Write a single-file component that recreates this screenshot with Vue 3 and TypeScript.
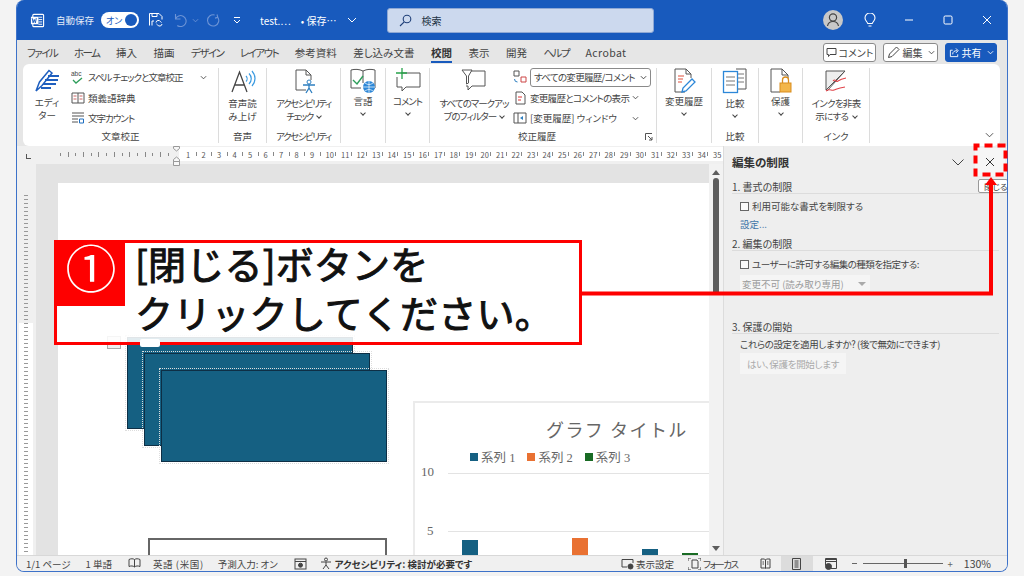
<script setup lang="ts">
const tabs = [
  { label: 'ファイル', kana: true },
  { label: 'ホーム', kana: true },
  { label: '挿入', kana: false },
  { label: '描画', kana: false },
  { label: 'デザイン', kana: true },
  { label: 'レイアウト', kana: true },
  { label: '参考資料', kana: false },
  { label: '差し込み文書', kana: false },
  { label: '校閲', kana: false },
  { label: '表示', kana: false },
  { label: '開発', kana: false },
  { label: 'ヘルプ', kana: true },
  { label: 'Acrobat', kana: false }
]
const rulerLeft = Array.from({ length: 15 }, (_, i) => i)
const rulerNums = Array.from({ length: 35 }, (_, i) => i + 1)
const legend = [
  { name: '系列 1', cls: 'c-blue' },
  { name: '系列 2', cls: 'c-orange' },
  { name: '系列 3', cls: 'c-green' }
]
const bars = [
  { cls: 'c-blue', x: 47, h: 17 },
  { cls: 'c-orange', x: 157, h: 19 },
  { cls: 'c-blue', x: 227, h: 8 },
  { cls: 'c-green', x: 267, h: 4 }
]
</script>

<template>
  <div class="stage">
    <div class="window">
      <!-- title bar -->
      <header class="titlebar">
        <svg class="ic-word" viewBox="0 0 16 16" width="15" height="15">
          <rect x="3" y="1.5" width="11.5" height="13" rx="1" fill="none" stroke="#fff" stroke-width="1.2" />
          <path d="M9 4.5h4M9 7h4M9 9.5h4M9 12h4" stroke="#fff" />
          <rect x="1" y="4" width="8" height="8" fill="#fff" />
          <path d="M2.3 5.5l1 5 1.2-3.6 1.2 3.6 1-5" fill="none" stroke="#185abd" />
        </svg>
        <span class="autosave">自動保存</span>
        <span class="toggle"><span class="toggle-text">オン</span><span class="knob"></span></span>
        <svg class="ic-save" viewBox="0 0 14 14" width="14" height="14" fill="none" stroke="#fff">
          <path d="M.5 12.5v-12h9.5l3 3v3" />
          <path d="M3 .5v3h5v-3M3 12.5V8h2" />
          <path d="M7 9.5a2.4 2.4 0 0 1 4.5-.8l1 .8M13 11a2.4 2.4 0 0 1-4.5.8l-1-.8" />
        </svg>
        <svg class="ic-undo" viewBox="0 0 14 14" width="14" height="14" fill="none" stroke="#6d94d6" stroke-width="1.1">
          <path d="M1.5 1v5h5M1.5 6a5.5 5.5 0 1 1 1.8 6.5" />
        </svg>
        <svg class="ic-mini-chev" viewBox="0 0 8 5" width="7" height="5" fill="none" stroke="#6d94d6"><path d="M1 1l3 3 3-3" /></svg>
        <svg class="ic-redo" viewBox="0 0 14 14" width="14" height="14" fill="none" stroke="#6d94d6" stroke-width="1.1">
          <path d="M11 1.5l.8 2.8-2.8.8M11.6 4a5.6 5.6 0 1 1-3-2" />
        </svg>
        <svg class="ic-qat" viewBox="0 0 8 7" width="8" height="7" fill="none" stroke="#fff"><path d="M1 .5h6M1 3l3 3 3-3" /></svg>
        <span class="docname">test.…</span>
        <span class="docstate">• 保存…</span>
        <svg class="ic-doc-chev" viewBox="0 0 10 6" width="10" height="6" fill="none" stroke="#fff"><path d="M1 1l4 4 4-4" /></svg>
        <div class="search">
          <svg viewBox="0 0 13 13" width="13" height="13" fill="none" stroke="#1f3f78" stroke-width="1.1">
            <circle cx="8" cy="5" r="3.8" /><path d="M5.2 7.8L1 12" />
          </svg>
          <span>検索</span>
        </div>
        <div class="title-right">
          <span class="avatar">
            <svg viewBox="0 0 20 20" width="20" height="20" fill="none" stroke="#444" stroke-width="1.2">
              <circle cx="10" cy="7.5" r="3.6" /><path d="M4.5 16c.6-3 3-4.5 5.5-4.5s4.900 1.500 5.500 4.500" />
            </svg>
          </span>
          <svg class="ic-bulb" viewBox="0 0 12 15" width="12" height="15" fill="none" stroke="#fff" stroke-width="1.1">
            <path d="M3.800 10.500C3 8.500 1 7.500 1 5a5 5 0 0 1 10 0c0 2.500-2 3.500-2.800 5.500zM4.500 13h3" />
          </svg>
          <svg class="ic-win" viewBox="0 0 10 10" width="10" height="10" stroke="#fff" fill="none"><path d="M1 5h8" /></svg>
          <svg class="ic-win" viewBox="0 0 10 10" width="10" height="10" stroke="#fff" fill="none"><rect x="1" y="1" width="8" height="8" rx="1.200" /></svg>
          <svg class="ic-win" viewBox="0 0 10 10" width="10" height="10" stroke="#fff" fill="none"><path d="M1 1l8 8M9 1l-8 8" /></svg>
        </div>
      </header>

      <!-- tabs -->
      <nav class="tabs">
        <span
          v-for="t in tabs"
          :key="t.label"
          class="tab"
          :class="{ active: t.label === '校閲', 'tab-kana': t.kana, 'tab-latin': t.label === 'Acrobat' }"
        >{{ t.label }}</span>
        <div class="tab-actions">
          <button class="pill pill-comment">
            <svg viewBox="0 0 11 11" width="11" height="11" fill="none" stroke="#444"><path d="M1 1.500h9v6H4L2.500 9.500v-2H1z" /></svg>
            コメント
          </button>
          <button class="pill pill-edit">
            <svg viewBox="0 0 14 14" width="14" height="14" fill="none" stroke="#444"><path d="M1.500 12.500l1-3.500 7-7 2.500 2.500-7 7z" /></svg>
            編集
            <svg class="chev" viewBox="0 0 8 5" width="7" height="5" fill="none" stroke="#444"><path d="M1 1l3 3 3-3" /></svg>
          </button>
          <button class="pill pill-share">
            <svg viewBox="0 0 12 12" width="11" height="11" fill="none" stroke="#fff"><path d="M4 3.500H1.500v7h8V8M4 8c0-3 2-4 5-4M7.500 1.500L10 4 7.500 6.500" /></svg>
            共有
            <svg class="chev" viewBox="0 0 8 5" width="7" height="5" fill="none" stroke="#fff"><path d="M1 1l3 3 3-3" /></svg>
          </button>
        </div>
      </nav>

      <!-- ribbon -->
      <section class="ribbon">
        <div class="group g-spell">
          <div class="group-body">
            <div class="big editor-btn">
              <svg viewBox="0 0 26 26" width="26" height="26">
                <path d="M2 23l3.500-9L15 2.500l3 2.500-10 12.500z" fill="none" stroke="#1f5fbf" stroke-width="1.500" />
                <path d="M14 8h11M11 12h13M9 16h13M7 20h10" stroke="#1f5fbf" stroke-width="2" />
              </svg>
              <span>エディ<br />ター</span>
            </div>
            <div class="rows spell-rows">
              <div class="row">
                <svg viewBox="0 0 14 14" width="14" height="14" fill="none"><text x="0" y="6" font-size="6.500" fill="#444" font-family="Liberation Sans">abc</text><path d="M2 10l3 3 6-5" stroke="#2e9e5b" stroke-width="1.300" /></svg>
                <span class="kana">スペル チェックと文章校正</span>
                <svg class="row-chev" viewBox="0 0 8 5" width="7" height="5" fill="none" stroke="#444"><path d="M1 1l3 3 3-3" /></svg>
              </div>
              <div class="row">
                <svg viewBox="0 0 14 14" width="14" height="14" fill="none" stroke="#555"><path d="M1 2h12v10H1zM7 2v10" /><path d="M2.500 5h3M8.500 5h3M2.500 8h3M8.500 8h3" stroke="#c66" /></svg>
                <span>類義語辞典</span>
              </div>
              <div class="row">
                <svg viewBox="0 0 14 14" width="14" height="14" fill="none" stroke="#555"><path d="M1 2h12M1 5h12M1 8h6M1 11h6" /><path d="M8.500 8h4v4h-4z" stroke="#1f6fc0" /></svg>
                <span class="kana">文字カウント</span>
              </div>
            </div>
          </div>
          <div class="group-label">文章校正</div>
        </div>

        <div class="group g-voice">
          <div class="group-body">
            <div class="big">
              <svg viewBox="0 0 26 26" width="26" height="26" fill="none">
                <path d="M2 24L9.500 4 17 24M5 17h9" stroke="#444" stroke-width="1.300" />
                <path d="M16 8c1.500 1.500 1.500 4 0 5.500M19 5.500c3 3 3 7.500 0 10.500M22 3c4 4.500 4 10.500 0 15" stroke="#3a9ae0" stroke-width="1.200" />
              </svg>
              <span>音声読<br />み上げ</span>
            </div>
          </div>
          <div class="group-label">音声</div>
        </div>

        <div class="group g-access">
          <div class="group-body">
            <div class="big">
              <svg viewBox="0 0 26 26" width="26" height="26" fill="none">
                <path d="M15 22H5V2h10l5 5v5M15 2v5h5" stroke="#555" />
                <circle cx="18" cy="14" r="2" stroke="#2e7fc0" />
                <path d="M12 17h12M18 16v4l-3 5M18 20l3 5" stroke="#2e7fc0" stroke-width="1.300" />
              </svg>
              <span class="kana-tight">アクセシビリティ<br />チェック <i class="inline-chev"></i></span>
            </div>
          </div>
          <div class="group-label kana-tight">アクセシビリティ</div>
        </div>

        <div class="group g-lang">
          <div class="group-body">
            <div class="big tight">
              <svg viewBox="0 0 26 26" width="26" height="26" fill="none">
                <path d="M1 2c4-1 8-1 12 1 4-2 8-2 12-1v18h-10M13 3v12M1 2v18h10" stroke="#555" />
                <path d="M3 12l4 4 6-8" stroke="#2e9e5b" stroke-width="1.400" />
                <circle cx="19" cy="19" r="6" fill="#2c87d8" />
                <path d="M13 19h12M19 13v12M15 15c3 2 5 2 8 0M15 23c3-2 5-2 8 0" stroke="#fff" stroke-width=".7" />
              </svg>
              <span>言語</span>
              <i class="block-chev"></i>
            </div>
          </div>
        </div>

        <div class="group g-comment">
          <div class="group-body">
            <div class="big tight">
              <svg viewBox="0 0 26 26" width="26" height="26" fill="none">
                <path d="M6 5h19v14H11l-4 4v-4H2V9" stroke="#555" />
                <path d="M7 0v11M1 5h11" stroke="#27a34a" stroke-width="1.300" />
              </svg>
              <span class="kana">コメント</span>
              <i class="block-chev"></i>
            </div>
          </div>
        </div>

        <div class="group g-track">
          <div class="group-body">
            <div class="big markup">
              <svg viewBox="0 0 26 26" width="26" height="26" fill="none">
                <path d="M2 3h22v15H11l-4 4v-4H5" stroke="#555" />
                <path d="M1 2h10L7.500 8v7l-2 1V8z" stroke="#555" fill="#fff" />
              </svg>
              <span class="kana">すべてのマークアッ<br />プのフィルター <i class="inline-chev"></i></span>
            </div>
            <div class="rows track-rows">
              <div class="row">
                <svg viewBox="0 0 14 14" width="14" height="14" fill="none"><path d="M1 1h5v5H1z" stroke="#555" /><path d="M1.500 9a3 3 0 0 0 3 3" stroke="#2e7fc0" /><path d="M8 7h5v5H8z" stroke="#c44" /></svg>
                <div class="combo"><span class="kana-soft">すべての変更履歴/コメント</span><svg viewBox="0 0 8 5" width="7" height="5" fill="none" stroke="#333"><path d="M1 1l3 3 3-3" /></svg></div>
              </div>
              <div class="row">
                <svg viewBox="0 0 14 14" width="14" height="14" fill="none" stroke="#555"><path d="M3 1h6l3 3v9H3z" /><path d="M5 6h4M5 9h3" stroke="#d33" /></svg>
                <span class="kana-soft">変更履歴とコメントの表示</span>
                <svg class="row-chev" viewBox="0 0 8 5" width="7" height="5" fill="none" stroke="#444"><path d="M1 1l3 3 3-3" /></svg>
              </div>
              <div class="row">
                <svg viewBox="0 0 14 14" width="14" height="14" fill="none" stroke="#555"><path d="M1 2h12v10H1zM5 2v10" /><path d="M7 7l3-2v4z" fill="#2e7fc0" stroke="none" /></svg>
                <span>[変更履歴] ウィンドウ</span>
                <svg class="row-chev" viewBox="0 0 8 5" width="7" height="5" fill="none" stroke="#444"><path d="M1 1l3 3 3-3" /></svg>
              </div>
            </div>
          </div>
          <div class="group-label track-label">校正履歴
            <svg class="launcher" viewBox="0 0 8 8" width="8" height="8" fill="none" stroke="#555"><path d="M.5 7V.5H7M3 3l4 4M4 7h3V4" /></svg>
          </div>
        </div>

        <div class="group g-changes">
          <div class="group-body">
            <div class="big tight">
              <svg viewBox="0 0 26 26" width="26" height="26" fill="none">
                <path d="M14 24H4V1h11l5 5v4M15 1v5h5" stroke="#555" />
                <path d="M7 8h6M7 11h5M7 14h4" stroke="#e0503c" />
                <path d="M11 24l1-4 9-9 3 3-9 9z" stroke="#2c87d8" stroke-width="1.300" />
              </svg>
              <span>変更履歴</span>
              <i class="block-chev"></i>
            </div>
          </div>
        </div>

        <div class="group g-compare">
          <div class="group-body">
            <div class="big">
              <svg viewBox="0 0 26 26" width="26" height="26" fill="none">
                <path d="M14 1h10v20H14" stroke="#555" />
                <path d="M16 6h6M16 10h6M16 14h6" stroke="#777" />
                <rect x="1.500" y="3.500" width="14" height="21" fill="#fff" stroke="#2c87d8" stroke-width="1.300" />
                <path d="M4 9h9M4 13h9M4 17h9" stroke="#777" />
              </svg>
              <span>比較</span>
              <i class="block-chev"></i>
            </div>
          </div>
          <div class="group-label">比較</div>
        </div>

        <div class="group g-protect">
          <div class="group-body">
            <div class="big tight">
              <svg viewBox="0 0 26 26" width="26" height="26" fill="none">
                <path d="M12 24H3V1h11l6 6v3M14 1v6h6" stroke="#555" />
                <rect x="12" y="15" width="11" height="9" fill="#f3b64a" stroke="#d98d1e" />
                <path d="M14.500 15v-3a3 3 0 0 1 6 0v3" stroke="#d98d1e" stroke-width="1.300" />
              </svg>
              <span>保護</span>
              <i class="block-chev"></i>
            </div>
          </div>
        </div>

        <div class="group g-ink">
          <div class="group-body">
            <div class="big">
              <svg viewBox="0 0 26 26" width="26" height="26" fill="none">
                <path d="M3 3h19L3 22z" fill="#eee" stroke="#555" />
                <path d="M4 23L22 3" stroke="#555" />
                <path d="M10 13c3-3 2 2 5 0s3-2 8-3M3 23c4-3 5 0 8-1s4-2 11-3" stroke="#e0444a" stroke-width="1.100" />
              </svg>
              <span class="kana-soft">インクを非表<br />示にする <i class="inline-chev"></i></span>
            </div>
          </div>
          <div class="group-label">インク</div>
        </div>

        <svg class="collapse" viewBox="0 0 10 6" width="9" height="6" fill="none" stroke="#444"><path d="M1 1l4 4 4-4" /></svg>
      </section>

      <!-- workspace -->
      <div class="workspace">
        <main class="main">
          <div class="ruler">
            <div class="ruler-corner"><span class="tab-stop"></span></div>
            <div class="ruler-gray">
              <i v-for="n in rulerLeft" :key="n" :class="{ long: n % 2 === 1 }"></i>
            </div>
            <div class="ruler-white">
              <svg class="indent-marker" viewBox="0 0 9 20" width="9" height="20" fill="#f7f7f7" stroke="#999">
                <path d="M1.500.5h6v2L4.500 5l-3-2.500z" />
                <path d="M4.500 11l3 2.500v2h-6v-2zM1.500 15.500h6v4h-6z" />
              </svg>
              <div v-for="n in rulerNums" :key="n" class="ruler-cell"><em>{{ n }}</em><i></i></div>
            </div>
          </div>

          <div class="doc">
            <div class="vruler"><div class="vr-gray"></div><div class="vr-white"></div></div>
            <div class="gutter"></div>
            <div class="page-wrap">
              <div class="page">
                <div class="layout-opt"></div>
                <div class="shape s1"></div>
                <div class="handle"></div>
                <div class="shape s2"></div>
                <div class="shape s3"></div>
                <div class="textbox"></div>
                <div class="chart">
                  <div class="chart-title">グラフ タイトル</div>
                  <div class="legend">
                    <span v-for="l in legend" :key="l.name"><i :class="l.cls"></i>{{ l.name }}</span>
                  </div>
                  <span class="axis a10">10</span>
                  <span class="axis a5">5</span>
                  <div class="grid g10"></div>
                  <div class="grid g5"></div>
                  <div
                    v-for="b in bars"
                    :key="b.x"
                    class="bar"
                    :class="b.cls"
                    :style="{ left: b.x + 'px', height: b.h + 'px' }"
                  ></div>
                </div>
              </div>
            </div>
            <div class="scrollbar">
              <i class="arrow-up"></i>
              <div class="thumb"></div>
              <i class="arrow-down"></i>
            </div>
          </div>
        </main>

        <aside class="panel">
          <div class="panel-head">
            <h2>編集の制限</h2>
            <svg viewBox="0 0 12 7" width="12" height="7" fill="none" stroke="#444"><path d="M.5.500L6 6l5.500-5.500" /></svg>
            <button class="panel-close">
              <svg viewBox="0 0 10 10" width="10" height="10" fill="none" stroke="#333"><path d="M1 1l8 8M9 1l-8 8" /></svg>
            </button>
          </div>
          <div class="tooltip">閉じる</div>

          <h3>1. 書式の制限</h3>
          <label class="check"><i></i>利用可能な書式を制限する</label>
          <a class="link">設定...</a>

          <h3 class="sec2">2. 編集の制限</h3>
          <label class="check narrow"><i></i>ユーザーに許可する編集の種類を指定する:</label>
          <div class="select">変更不可 (読み取り専用)<span></span></div>

          <h3 class="sec3">3. 保護の開始</h3>
          <p class="question">これらの設定を適用しますか? (後で無効にできます)</p>
          <button class="start">はい、保護を開始します</button>
        </aside>
      </div>

      <!-- status bar -->
      <footer class="status">
        <span>1/1 ページ</span>
        <span class="st-words">1 単語</span>
        <svg class="st-book" viewBox="0 0 13 12" width="13" height="12" fill="none" stroke="#444"><path d="M1 1.500c2-1 4-1 5.500 0 1.500-1 3.500-1 5.500 0v7c-2-.8-4-.8-5.500.5C5 7.700 3 7.700 1 8.500zM6.500 1.500V9" /></svg>
        <span class="st-lang">英語 (米国)</span>
        <span class="st-pred">予測入力: オン</span>
        <svg class="st-macro" viewBox="0 0 13 12" width="13" height="12" fill="none" stroke="#444"><rect x="1" y="1" width="11" height="10" /><path d="M1 3.500h11" /><circle cx="6.500" cy="7.200" r="2" fill="#444" /></svg>
        <svg class="st-acc" viewBox="0 0 13 13" width="13" height="13" fill="none" stroke="#444"><circle cx="6" cy="2.500" r="1.500" /><path d="M1 5h10M6 5v3L3 12M6 8l3 4" /></svg>
        <strong>アクセシビリティ: 検討が必要です</strong>
        <div class="st-right">
          <svg viewBox="0 0 13 12" width="13" height="12" fill="none" stroke="#444"><path d="M6 9H1V1.500h11V5" /><circle cx="9.500" cy="8.500" r="2.500" fill="#444" /></svg>
          <span class="st-disp">表示設定</span>
          <svg class="st-focus" viewBox="0 0 13 12" width="13" height="12" fill="none" stroke="#444"><path d="M4 2h5l1 1.500V10H4zM0 3V0h3M13 3V0h-3M0 9v3h3M13 9v3h-3" /></svg>
          <span class="st-foc">フォーカス</span>
          <svg class="st-read" viewBox="0 0 11 11" width="11" height="11" fill="none" stroke="#444"><path d="M1 1h3.500l1 1 1-1H10v9H6.500l-1 .5-1-.5H1zM5.500 2v8M2.500 4h1.500M2.500 6h1.500M7 4h1.500M7 6h1.500" /></svg>
          <div class="view-active">
            <svg viewBox="0 0 9 12" width="9" height="12" fill="none" stroke="#444"><path d="M.5.500h8v11h-8zM2.500 3h4M2.500 5h4M2.500 7h4M2.500 9h4" /></svg>
          </div>
          <svg class="st-web" viewBox="0 0 12 12" width="12" height="12" fill="none" stroke="#444"><path d="M.5 1.500h11M.5 3.500h11M.5.500h11v10H6" /><path d="M.5.500v7" /><circle cx="3.500" cy="8.500" r="3" fill="#444" /></svg>
          <span class="zoom-minus"></span>
          <div class="slider"><i></i></div>
          <span class="zoom-plus">+</span>
          <span class="zoom-val">130%</span>
        </div>
      </footer>
    </div>

    <!-- annotation on top of the screenshot -->
    <svg class="connector" viewBox="0 0 1024 576" width="1024" height="576" fill="none" stroke="#fe0000">
      <path d="M581 293.500H991V184" stroke-width="4" />
      <path d="M991 177l-6 8h12z" fill="#fe0000" stroke="none" />
      <rect x="975.500" y="145.500" width="30" height="29" stroke-width="4" stroke-dasharray="8 5" stroke-dashoffset="4" />
    </svg>
    <div class="note">
      <div class="note-num">①</div>
      <div class="note-text">[閉じる]ボタンを<br />クリックしてください。</div>
    </div>
  </div>
</template>

<style>
html,
body {
  margin: 0;
  background: #f3f3f3;
}
</style>

<style scoped>
* {
  box-sizing: border-box;
}

.stage {
  position: relative;
  width: 1024px;
  height: 576px;
  padding: 0 16px 4px;
  overflow: hidden;
  background: #f3f3f3;
  font-family: "Noto Sans CJK JP", "Noto Sans", sans-serif;
  font-feature-settings: "palt";
  color: #444;
  font-size: 9.5px;
}

.kana {
  letter-spacing: -1px;
}

.kana-tight {
  letter-spacing: -1.5px;
}

.kana-soft {
  letter-spacing: -0.7px;
}

.window {
  display: flex;
  flex-direction: column;
  height: 100%;
  background: #e6e6e6;
  border: 1px solid #3d72c9;
  border-top: 0;
  border-radius: 8px;
  overflow: hidden;
}

/* title bar */
.titlebar {
  display: flex;
  align-items: center;
  flex: 0 0 40px;
  padding: 0 0 0 13px;
  background: #185abd;
  color: #fff;
}

.autosave {
  margin-left: 11px;
  font-size: 9.5px;
  color: #e4ecf8;
}

.toggle {
  display: flex;
  align-items: center;
  justify-content: space-between;
  width: 38px;
  height: 16px;
  margin-left: 7px;
  padding: 0 2px 0 5px;
  background: #fff;
  border-radius: 8px;
  color: #185abd;
  font-size: 9px;
}

.knob {
  width: 12px;
  height: 12px;
  border-radius: 50%;
  background: #185abd;
}

.ic-save {
  margin-left: 10px;
}

.ic-undo {
  margin-left: 11px;
}

.ic-mini-chev {
  margin-left: 4px;
}

.ic-redo {
  margin-left: 7px;
}

.ic-qat {
  margin-left: 13px;
}

.docname {
  margin-left: 19px;
  font-size: 10px;
}

.docstate {
  margin-left: 10px;
  font-size: 10px;
}

.ic-doc-chev {
  margin-left: 10px;
}

.search {
  display: flex;
  align-items: center;
  gap: 10px;
  width: 267px;
  height: 25px;
  margin-left: 30px;
  padding-left: 11px;
  background: #ccd9ee;
  border: 1px solid #8ea8d4;
  border-radius: 3px;
  color: #234;
  font-size: 10px;
}

.title-right {
  display: flex;
  align-items: center;
  margin-left: auto;
  padding-right: 15px;
}

.avatar {
  display: flex;
  width: 20px;
  height: 20px;
  border-radius: 50%;
  background: #c8c8c8;
}

.ic-bulb {
  margin-left: 21px;
  margin-right: 28px;
}

.ic-win {
  margin-left: 29px;
}

.ic-bulb + .ic-win {
  margin-left: 0;
}

/* tabs */
.tabs {
  display: flex;
  align-items: center;
  flex: 0 0 24px;
  gap: 16.5px;
  padding-left: 10px;
  background: #e6e6e6;
  font-size: 10.5px;
  color: #444;
}

.tab {
  position: relative;
  white-space: nowrap;
}

.tab-kana {
  letter-spacing: -1.5px;
}

.tab-latin {
  letter-spacing: 0.4px;
}

.tab.active {
  font-weight: 700;
  color: #333;
}

.tab.active::after {
  content: "";
  position: absolute;
  left: 0;
  right: 0;
  bottom: -3px;
  height: 2px;
  background: #185abd;
}

.tab-actions {
  display: flex;
  gap: 7px;
  margin-left: auto;
  padding-right: 10px;
}

.pill {
  display: flex;
  align-items: center;
  justify-content: center;
  gap: 2px;
  height: 19px;
  padding: 0;
  background: #fff;
  border: 1px solid #8a8a8a;
  border-radius: 3px;
  color: #444;
  font: inherit;
  font-size: 10px;
  white-space: nowrap;
}

.pill-comment {
  width: 53px;
}

.pill-edit {
  width: 55px;
}

.pill-share {
  width: 52px;
  background: #185abd;
  border-color: #185abd;
  color: #fff;
}

.pill .chev {
  margin-left: 3px;
}

/* ribbon */
.ribbon {
  position: relative;
  display: flex;
  flex: 0 0 82px;
  margin: 0 7px 0 6px;
  padding: 4px 0 3px;
  background: #fff;
  border-radius: 6px;
  font-size: 9.5px;
}

.group {
  display: flex;
  flex-direction: column;
  border-right: 1px solid #dcdcdc;
}

.g-spell { width: 196px; }
.g-voice { width: 48px; }
.g-access { width: 74px; }
.g-lang { width: 45px; }
.g-comment { width: 44px; }
.g-track { width: 227px; }
.g-changes { width: 55px; }
.g-compare { width: 47px; }
.g-protect { width: 44px; }
.g-ink { width: 67px; }

.group-body {
  display: flex;
  flex: 1;
  min-height: 0;
}

.group-label {
  flex: 0 0 13px;
  text-align: center;
  line-height: 13px;
  font-size: 9.5px;
  white-space: nowrap;
}

.big {
  display: flex;
  flex-direction: column;
  align-items: center;
  flex: 1;
  text-align: center;
  line-height: 13px;
  white-space: nowrap;
}

.big svg {
  margin-bottom: 3px;
}

.big.tight svg {
  margin-bottom: 1px;
}

.editor-btn {
  flex: 0 0 48px;
}

.editor-btn svg {
  margin-bottom: 2px;
}

.markup {
  flex: 0 0 88px;
}

.rows {
  display: flex;
  flex-direction: column;
  justify-content: space-between;
  flex: 1;
  min-width: 0;
  height: 58px;
  padding-top: 1px;
}

.spell-rows {
  padding-right: 11px;
}

.track-rows {
  margin-left: -5px;
  padding-right: 17px;
}

.row {
  position: relative;
  display: flex;
  align-items: center;
  gap: 3px;
  height: 16px;
  white-space: nowrap;
}

.row > svg {
  flex: none;
}

.row-chev {
  margin-left: auto;
}

.combo {
  display: flex;
  flex: 0 0 121px;
  align-items: center;
  justify-content: space-between;
  height: 19px;
  padding: 0 3px;
  border: 1px solid #8a8a8a;
  border-radius: 3px;
  font-size: 9.5px;
}

.track-label {
  position: relative;
  margin-left: 88px;
  text-align: left;
}

.launcher {
  position: absolute;
  right: 3px;
  top: 3px;
}

.inline-chev,
.block-chev {
  display: inline-block;
  width: 4px;
  height: 4px;
  border-right: 1px solid #444;
  border-bottom: 1px solid #444;
  transform: rotate(45deg);
}

.inline-chev {
  margin: 0 0 2px 3px;
}

.block-chev {
  margin-top: 3px;
}

.collapse {
  position: absolute;
  right: 6px;
  bottom: 8px;
}

/* workspace */
.workspace {
  display: flex;
  flex: 1;
  min-height: 0;
}

.main {
  display: flex;
  flex-direction: column;
  flex: 0 0 706px;
  min-width: 0;
}

.ruler {
  display: flex;
  flex: 0 0 18px;
  padding-top: 1px;
  background: #f0f0f0;
}

.ruler-corner {
  flex: 0 0 41px;
  padding: 7px 0 0 9px;
}

.tab-stop {
  display: block;
  width: 5px;
  height: 5px;
  border-left: 1.5px solid #555;
  border-bottom: 1.5px solid #555;
}

.ruler-gray {
  display: flex;
  align-items: center;
  gap: 6.7px;
  flex: 0 0 121px;
  height: 14px;
  padding-left: 2px;
}

.ruler-gray i {
  width: 1px;
  height: 3px;
  background: #888;
}

.ruler-gray i.long {
  height: 5px;
}

.ruler-white {
  position: relative;
  display: flex;
  align-items: center;
  flex: 1;
  height: 14px;
  padding-left: 7px;
  background: #fff;
}

.indent-marker {
  position: absolute;
  left: -7px;
  top: -1px;
}

.ruler-cell {
  display: flex;
  align-items: center;
  justify-content: space-between;
  flex: 0 0 15.5px;
  padding-right: 5px;
  font-size: 7.5px;
  color: #555;
}

.ruler-cell em {
  font-style: normal;
}

.ruler-cell i {
  width: 1px;
  height: 4px;
  background: #888;
}

.doc {
  display: flex;
  flex: 1;
  min-height: 0;
  background: #e3e3e3;
}

.vruler {
  display: flex;
  flex-direction: column;
  flex: 0 0 19px;
  padding: 31px 3px 0 2px;
  background: #f0f0f0;
}

.vr-gray,
.vr-white {
  background-image: repeating-linear-gradient(
    to bottom,
    #999 0,
    #999 1px,
    transparent 1px,
    transparent 4px
  );
  background-size: 4px 100%;
  background-repeat: no-repeat;
  background-position: center;
}

.vr-gray {
  flex: 0 0 128px;
}

.vr-white {
  flex: 1;
  background-color: #fff;
}

.gutter {
  flex: 0 0 22px;
}

.page-wrap {
  flex: 1;
  padding-top: 19px;
  min-width: 0;
}

.page {
  position: relative;
  height: 100%;
  background: #fff;
  overflow: hidden;
}

.layout-opt {
  position: absolute;
  left: 49px;
  top: 153px;
  width: 14px;
  height: 13px;
  background: #eee;
  border: 1px solid #aaa;
}

.shape {
  position: absolute;
  width: 226px;
  height: 92px;
  background: #156082;
  border: 1.5px solid #0e2f45;
  outline: 1px dotted #ddd;
  outline-offset: 1px;
}

.s1 { left: 69px; top: 154px; }
.s2 { left: 86px; top: 170px; height: 93px; }
.s3 { left: 103px; top: 187px; }

.handle {
  position: absolute;
  left: 82px;
  top: 156px;
  width: 20px;
  height: 8px;
  background: #fff;
  border-radius: 2px;
  z-index: 1;
}

.textbox {
  position: absolute;
  left: 90px;
  top: 355px;
  width: 239px;
  height: 40px;
  border: 2px solid #666;
  background: #fff;
}

.chart {
  position: absolute;
  left: 355px;
  top: 218px;
  width: 405px;
  height: 300px;
  background: #fff;
  border: 2px solid #ebebeb;
  font-family: "Liberation Serif", "Noto Sans CJK JP", serif;
  font-feature-settings: normal;
}

.chart-title {
  position: absolute;
  left: 131px;
  top: 13px;
  font-size: 18px;
  letter-spacing: 1.4px;
  color: #666;
  white-space: nowrap;
}

.legend {
  position: absolute;
  left: 55px;
  top: 44px;
  display: flex;
  gap: 12px;
  font-size: 12.5px;
  color: #666;
  white-space: nowrap;
}

.legend span {
  display: flex;
  align-items: center;
  gap: 3px;
}

.legend i {
  width: 8px;
  height: 8px;
}

.c-blue { background: #156082; }
.c-orange { background: #e97132; }
.c-green { background: #196b24; }

.axis {
  position: absolute;
  font-size: 13px;
  color: #666;
}

.a10 { left: 6px; top: 61px; }
.a5 { left: 12px; top: 120px; }

.grid {
  position: absolute;
  left: 33px;
  right: 0;
  height: 1px;
  background: #e3e3e3;
}

.g10 { top: 70px; }
.g5 { top: 128px; }

.bar {
  position: absolute;
  bottom: 142px;
  width: 16px;
}

.scrollbar {
  position: relative;
  display: flex;
  flex-direction: column;
  align-items: center;
  flex: 0 0 14px;
  background: #f2f2f2;
}

.thumb {
  width: 6px;
  height: 117px;
  margin-top: 3px;
  background: #5d5d5d;
  border-radius: 3px;
}

.arrow-up,
.arrow-down {
  width: 0;
  height: 0;
  border-left: 4px solid transparent;
  border-right: 4px solid transparent;
}

.arrow-up {
  margin-top: 6px;
  border-bottom: 5px solid #5d5d5d;
}

.arrow-down {
  margin-top: auto;
  margin-bottom: 4px;
  border-top: 5px solid #5d5d5d;
}

/* side panel */
.panel {
  position: relative;
  flex: 1;
  padding: 0 8px 0 8px;
  background: #eeeeee;
  border-left: 1px solid #dcdcdc;
  color: #444;
}

.panel-head {
  display: flex;
  align-items: center;
  height: 34px;
  margin-right: -8px;
}

.panel-head h2 {
  margin: -2px 0 0;
  flex: 1;
  font-size: 11.5px;
  font-weight: 700;
  color: #333;
}

.panel-head > svg {
  margin: 0 11px 2px 0;
}

.panel-close {
  display: flex;
  align-items: center;
  justify-content: center;
  width: 30px;
  height: 28px;
  margin: 0 2px 2px 0;
  padding: 0;
  background: #f6f6f6;
  border: 0;
}

.tooltip {
  position: absolute;
  left: 254px;
  top: 33px;
  width: 30px;
  height: 14px;
  padding-left: 5px;
  background: #fff;
  border: 1px solid #999;
  border-radius: 2px;
  font-size: 8.5px;
  line-height: 12px;
  white-space: nowrap;
}

.panel h3 {
  margin: 0 0 5px;
  border-bottom: 1px solid #dcdcdc;
  font-size: 10px;
  font-weight: 400;
  line-height: 13px;
}

.panel .sec2 {
  margin: 6px 0 6px;
}

.panel .sec3 {
  margin: 28px 0 3px;
}

.check {
  display: flex;
  align-items: center;
  gap: 3px;
  height: 14px;
  margin: 0 0 4px 8px;
  font-size: 9.5px;
  white-space: nowrap;
}

.check.narrow {
  letter-spacing: -0.5px;
}

.check i {
  width: 9px;
  height: 9px;
  background: #fafafa;
  border: 1px solid #666;
}

.link {
  display: block;
  margin: 1px 0 0 8px;
  font-size: 9.5px;
  line-height: 14px;
  color: #3f76a8;
}

.select {
  display: flex;
  align-items: center;
  justify-content: space-between;
  width: 130px;
  height: 17px;
  margin-left: 8px;
  padding-left: 2px;
  background: #f5f5f5;
  color: #9a9a9a;
  font-size: 9.5px;
  white-space: nowrap;
}

.select span {
  width: 0;
  height: 0;
  margin-right: 4px;
  border-left: 4px solid transparent;
  border-right: 4px solid transparent;
  border-top: 4px solid #aaa;
}

.question {
  margin: 0 0 2px 8px;
  font-size: 9.5px;
  line-height: 14px;
  letter-spacing: -0.4px;
  white-space: nowrap;
}

.start {
  display: block;
  width: 106px;
  height: 21px;
  margin-left: 8px;
  padding: 0;
  background: #f5f5f5;
  border: 0;
  color: #aaa;
  font: inherit;
  font-size: 9.5px;
  letter-spacing: -0.3px;
}

/* status bar */
.status {
  display: flex;
  align-items: center;
  flex: 0 0 15px;
  padding-left: 9px;
  background: #f0f0f0;
  border-top: 1px solid #d8d8d8;
  font-size: 9.5px;
  white-space: nowrap;
}

.st-words { margin-left: 15px; }
.st-book { margin-left: 16px; }
.st-lang { margin-left: 12px; letter-spacing: 0.6px; }
.st-pred { margin-left: 14px; }
.st-macro { margin-left: 16px; }
.st-acc { margin-left: 13px; margin-right: 2px; }

.status strong {
  font-weight: 700;
  color: #333;
}

.st-right {
  display: flex;
  align-items: center;
  height: 100%;
  margin-left: auto;
  padding-right: 16px;
}

.st-disp { margin-left: 2px; }
.st-focus { margin-left: 14px; }
.st-foc { margin-left: 2px; letter-spacing: -1.5px; }
.st-read { margin-left: 22px; }

.view-active {
  display: flex;
  align-items: center;
  justify-content: center;
  width: 32px;
  height: 100%;
  margin-left: 10px;
  background: #dcdcdc;
}

.st-web { margin-left: 12px; }

.zoom-minus {
  width: 5px;
  height: 1px;
  margin-left: 15px;
  background: #666;
}

.slider {
  position: relative;
  width: 80px;
  height: 1px;
  margin-left: 6px;
  background: #666;
}

.slider i {
  position: absolute;
  left: 41px;
  top: -4px;
  width: 3px;
  height: 9px;
  background: #555;
}

.zoom-plus {
  margin-left: 5px;
  color: #666;
}

.zoom-val {
  margin-left: 11px;
  font-size: 10.5px;
}

/* annotation */
.connector {
  position: absolute;
  left: 0;
  top: 0;
  pointer-events: none;
}

.note {
  position: absolute;
  left: 54px;
  top: 240px;
  display: flex;
  width: 528px;
  height: 105px;
  background: rgba(255, 255, 255, 0.88);
  border: 3px solid #fe0000;
  font-feature-settings: normal;
}

.note-num {
  display: flex;
  align-items: center;
  justify-content: center;
  flex: 0 0 68px;
  height: 63px;
  padding-bottom: 16px;
  background: #fe0000;
  color: #fff;
  font-size: 51px;
  line-height: 1;
}

.note-text {
  margin-top: -5px;
  padding-left: 10px;
  color: #111;
  font-size: 38px;
  font-weight: 400;
  -webkit-text-stroke: 1px #111;
  letter-spacing: 0.2px;
  line-height: 49px;
  white-space: nowrap;
}
</style>
